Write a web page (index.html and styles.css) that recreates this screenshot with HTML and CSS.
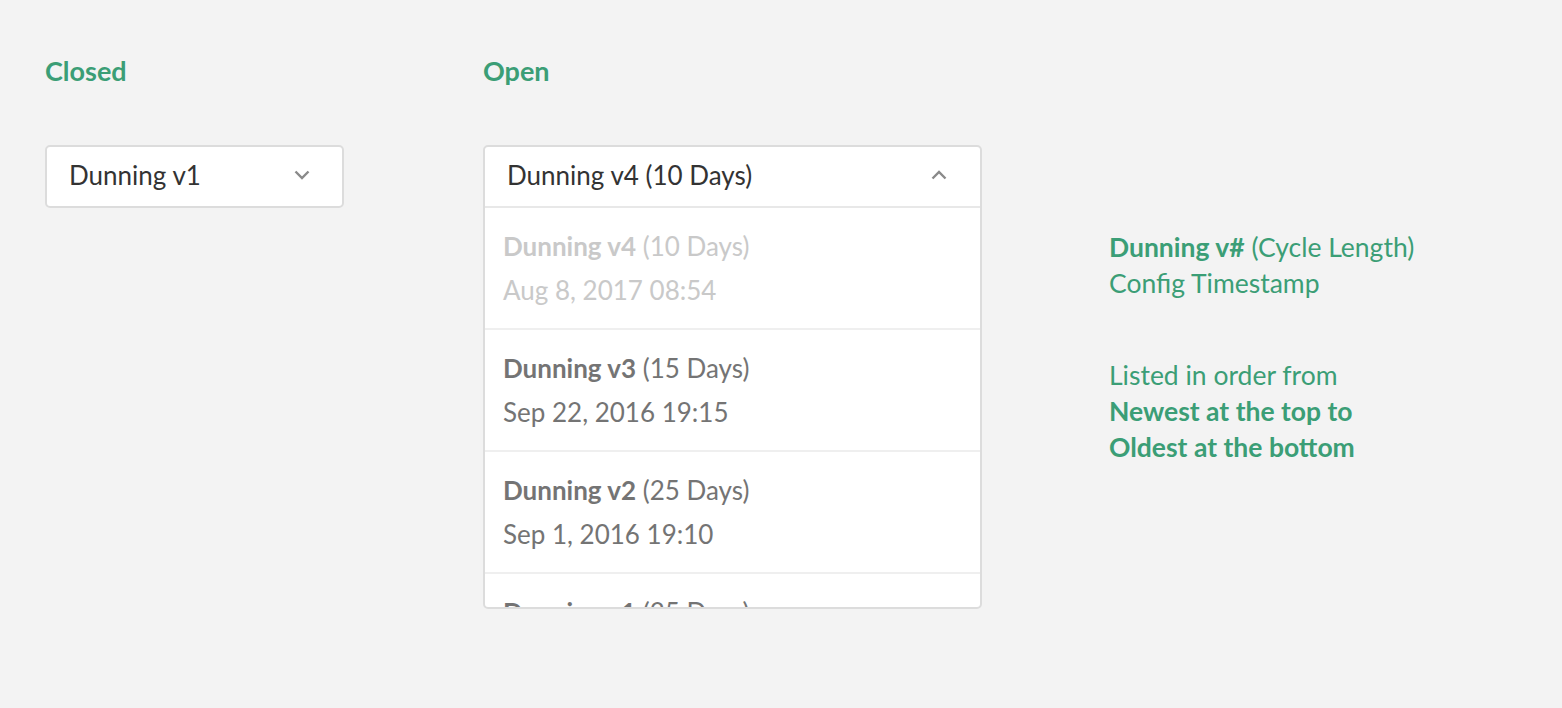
FILE: index.html
```html
<!DOCTYPE html>
<html lang="en">
<head>
  <meta charset="UTF-8">
  <title>Dunning Select</title>
  <link rel="stylesheet" href="styles.css">
</head>
<body>
  <div class="page">
    <!-- Closed state -->
    <div class="col col-closed">
      <h3 class="label">Closed</h3>
      <div class="select">
        <span>Dunning v1</span>
        <svg class="chev" width="16" height="10" viewBox="0 0 16 10"><path d="M1.5 1.5 L8 8 L14.5 1.5" fill="none" stroke="#8a8a8a" stroke-width="2.4"/></svg>
      </div>
    </div>

    <!-- Open state -->
    <div class="col col-open">
      <h3 class="label">Open</h3>
      <div class="dropdown">
        <div class="dropdown-head">
          <span>Dunning v4 (10 Days)</span>
          <svg class="chev" width="16" height="10" viewBox="0 0 16 10"><path d="M1.5 8.5 L8 2 L14.5 8.5" fill="none" stroke="#8a8a8a" stroke-width="2.4"/></svg>
        </div>
        <ul class="options">
          <li class="option current">
            <div><b>Dunning v4</b> (10 Days)</div>
            <div>Aug 8, 2017 08:54</div>
          </li>
          <li class="option">
            <div><b>Dunning v3</b> (15 Days)</div>
            <div>Sep 22, 2016 19:15</div>
          </li>
          <li class="option">
            <div><b>Dunning v2</b> (25 Days)</div>
            <div>Sep 1, 2016 19:10</div>
          </li>
          <li class="option">
            <div><b>Dunning v1</b> (25 Days)</div>
            <div>Aug 3, 2016 11:02</div>
          </li>
        </ul>
      </div>
    </div>

    <!-- Notes -->
    <div class="notes">
      <p><b>Dunning v#</b> (Cycle Length)<br>Config Timestamp</p>
      <p>Listed in order from<br><b>Newest at the top to<br>Oldest at the bottom</b></p>
    </div>
  </div>
</body>
</html>
```

FILE: styles.css
```css
* { box-sizing: border-box; }

body {
  margin: 0;
  background: #f3f3f3;
  font-family: 'Lato', 'Open Sans', sans-serif;
  color: #333;
}

.page {
  display: flex;
  padding: 56px 0 0 45px;
  min-height: 708px;
}

.col-closed { width: 438px; }
.col-open { width: 626px; }

.label {
  margin: 0 0 59px;
  font-size: 27px;
  line-height: 30px;
  font-weight: 700;
  color: #3b9e76;
}

.select {
  width: 299px;
  height: 63px;
  display: flex;
  align-items: center;
  justify-content: space-between;
  padding: 0 32px 4px 22px;
  background: #fff;
  border: 2px solid #dcdcdc;
  border-radius: 5px;
  font-size: 26px;
}

.chev { display: block; }

.dropdown {
  width: 499px;
  height: 464px;
  background: #fff;
  border: 2px solid #dcdcdc;
  border-radius: 5px;
  overflow: hidden;
}

.dropdown-head {
  height: 61px;
  display: flex;
  align-items: center;
  justify-content: space-between;
  padding: 0 33px 4px 22px;
  border-bottom: 2px solid #e8e8e8;
  font-size: 26px;
}

.options {
  list-style: none;
  margin: 0;
  padding: 0;
}

.option {
  padding: 16px 18px 16px;
  border-bottom: 2px solid #efefef;
  font-size: 26px;
  line-height: 44px;
  color: #747474;
}

.option b { font-weight: 700; }

.option.current { color: #c9c9c9; }

.notes {
  margin-top: 173px;
  font-size: 26.5px;
  line-height: 36px;
  color: #3b9e76;
}

.notes p { margin: 0 0 56px; }
.notes b { font-weight: 700; }
```
